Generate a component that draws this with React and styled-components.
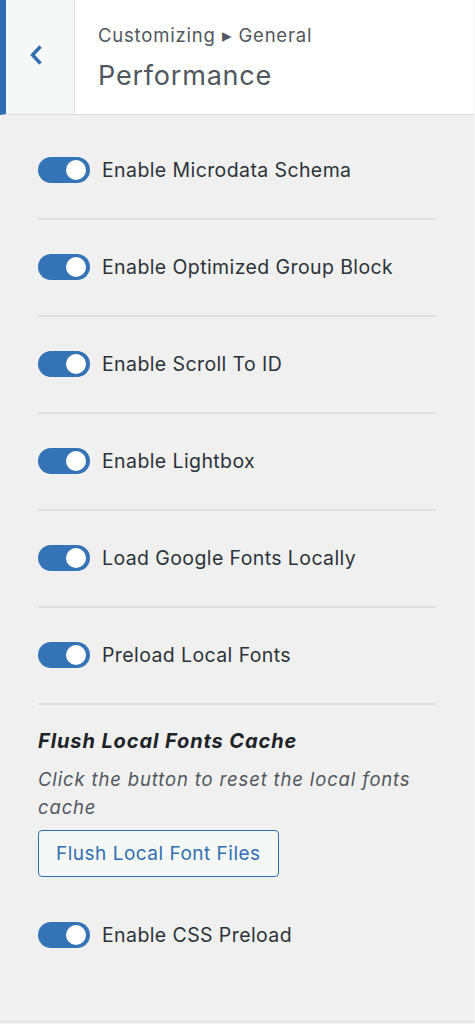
import React from 'react';
import styled, { createGlobalStyle } from 'styled-components';

const GlobalStyle = createGlobalStyle`
  html, body {
    margin: 0;
    padding: 0;
    background: #f0f0f1;
  }
  body {
    font-family: Inter, "Liberation Sans", sans-serif;
  }
`;

const settings = [
  'Enable Microdata Schema',
  'Enable Optimized Group Block',
  'Enable Scroll To ID',
  'Enable Lightbox',
  'Load Google Fonts Locally',
  'Preload Local Fonts',
];

const Panel = styled.div`
  width: 474px;
  height: 1021px;
  background: #f0f0f1;
  border-right: 1px solid #f6f6f6;
  border-bottom: 1px solid #dcdcde;
  display: flex;
  flex-direction: column;
`;

const Header = styled.div`
  display: flex;
  height: 114px;
  flex-shrink: 0;
  background: #fff;
  border-bottom: 1px solid #dcdcde;
  border-left: 6px solid #2f6fb1;
`;

const BackButton = styled.button`
  width: 69px;
  border: none;
  border-right: 1px solid #dcdcde;
  background: #f6f7f7;
  display: flex;
  align-items: center;
  justify-content: center;
  padding: 0 8px 4px 0;
  cursor: pointer;
`;

const Titles = styled.div`
  padding: 22px 0 0 23px;
  display: flex;
  flex-direction: column;
`;

const Crumb = styled.div`
  font-size: 18.5px;
  letter-spacing: 0.8px;
  color: #50575e;
  line-height: 26px;
`;

const Title = styled.div`
  font-size: 27px;
  letter-spacing: 0.8px;
  color: #50575e;
  line-height: 40px;
  margin-top: 8px;
  font-weight: 400;
`;

const Body = styled.div`
  padding: 8px 38px 0;
  display: flex;
  flex-direction: column;
`;

const Row = styled.div`
  height: 97px;
  display: flex;
  align-items: center;
  border-bottom: 2px solid #e0e0e0;
  box-sizing: border-box;
  padding-bottom: 2px;
`;

const LastRow = styled(Row)`
  height: auto;
  padding-top: 45px;
  border-bottom: none;
`;

const Track = styled.span`
  width: 52px;
  height: 26px;
  border-radius: 13px;
  background: #3373b6;
  position: relative;
  flex-shrink: 0;
  margin-right: 12px;
`;

const Knob = styled.span`
  position: absolute;
  top: 3px;
  right: 4px;
  width: 20px;
  height: 20px;
  border-radius: 50%;
  background: #fff;
`;

const Label = styled.span`
  font-size: 19.5px;
  letter-spacing: 0.4px;
  color: #2c3338;
`;

const Section = styled.div`
  padding-top: 22px;
  display: flex;
  flex-direction: column;
  align-items: flex-start;
`;

const SectionTitle = styled.div`
  font-size: 20px;
  letter-spacing: 0.9px;
  font-weight: 700;
  font-style: italic;
  color: #1d2327;
  line-height: 28px;
`;

const Description = styled.div`
  font-size: 18.5px;
  letter-spacing: 0.85px;
  font-style: italic;
  color: #50575e;
  line-height: 28px;
  margin-top: 10px;
  max-width: 390px;
`;

const FlushButton = styled.button`
  margin-top: 9px;
  height: 47px;
  padding: 0 17px;
  border: 1px solid #2f6fb1;
  border-radius: 4px;
  background: #f6f7f7;
  color: #2f6fb1;
  font-family: Inter, "Liberation Sans", sans-serif;
  font-size: 19px;
  letter-spacing: 0.5px;
  cursor: pointer;
`;

const Chevron = () => (
  <svg width="14" height="22" viewBox="0 0 14 22">
    <path d="M11.5 2.5 L3.5 11 L11.5 19.5" fill="none" stroke="#2f6fb1" strokeWidth="3.4" />
  </svg>
);

const Toggle = () => (
  <Track>
    <Knob />
  </Track>
);

const App = () => (
  <Panel>
    <GlobalStyle />
    <Header>
      <BackButton aria-label="Back">
        <Chevron />
      </BackButton>
      <Titles>
        <Crumb>Customizing ▸ General</Crumb>
        <Title>Performance</Title>
      </Titles>
    </Header>
    <Body>
      {settings.map(text => (
        <Row key={text}>
          <Toggle />
          <Label>{text}</Label>
        </Row>
      ))}
      <Section>
        <SectionTitle>Flush Local Fonts Cache</SectionTitle>
        <Description>Click the button to reset the local fonts cache</Description>
        <FlushButton>Flush Local Font Files</FlushButton>
      </Section>
      <LastRow>
        <Toggle />
        <Label>Enable CSS Preload</Label>
      </LastRow>
    </Body>
  </Panel>
);

export default App;
